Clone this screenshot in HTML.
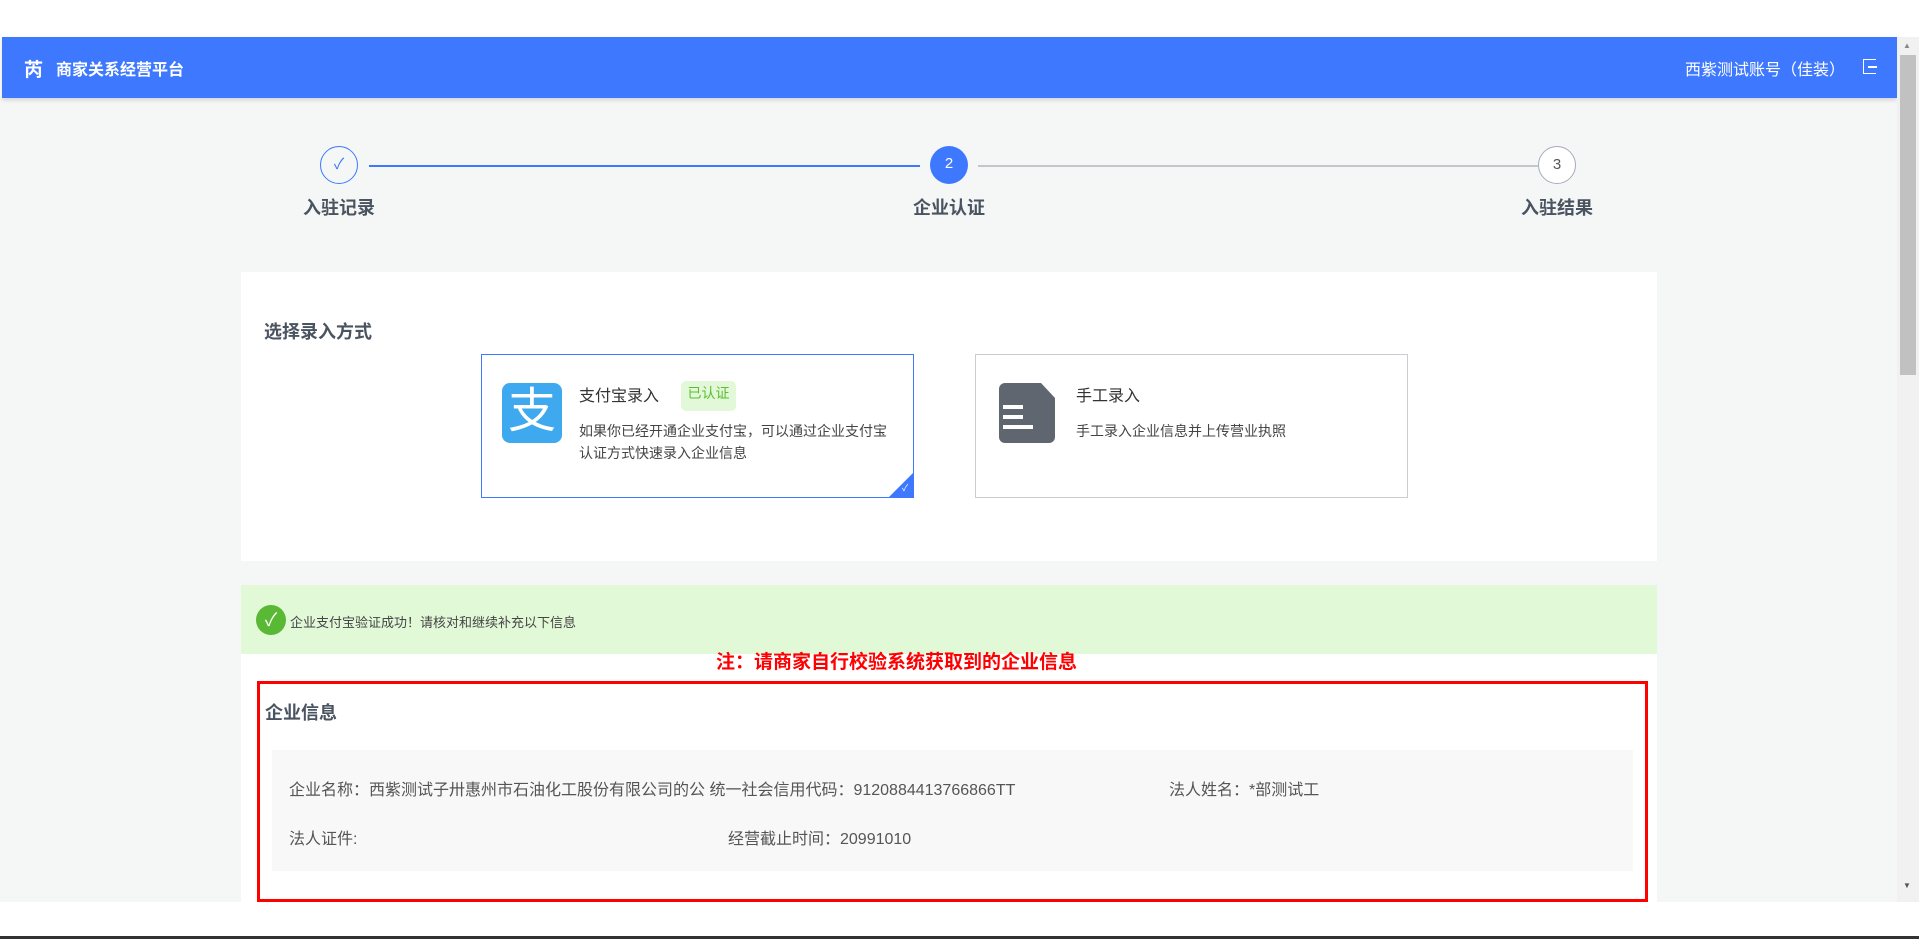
<!DOCTYPE html>
<html><head><meta charset="utf-8"><style>
*{margin:0;padding:0;box-sizing:border-box}
body{width:1919px;height:939px;position:relative;overflow:hidden;background:#fff;font-family:"Liberation Sans","Noto Sans CJK SC",sans-serif;color:#333}
.abs{position:absolute}
.bg{left:0;top:98px;width:1897px;height:804px;background:#f5f7f7}
.hdr{left:2px;top:37px;width:1895px;height:61px;background:#3e78ff;color:#fff;box-shadow:0 2px 4px rgba(0,0,0,.15)}
.sb{left:1897px;top:37px;width:22px;height:865px;background:#f1f1f1}
.circ{width:38px;height:38px;border-radius:50%;text-align:center;line-height:36px;font-size:15px}
.lbl{font-size:18px;font-weight:bold;color:#4a5360;width:200px;text-align:center;top:194px}
.card{background:#fff}
.opt{width:433px;height:144px;background:#fff;border:1px solid #c8cdd2}
.row{font-size:16px;color:#555}
</style></head><body>
<div class="abs bg"></div>
<div class="abs hdr">
  <div class="abs" style="left:22px;top:18px;font-size:19px;font-weight:bold">芮</div>
  <div class="abs" style="left:54px;top:19px;font-size:16px;font-weight:bold">商家关系经营平台</div>
  <div class="abs" style="left:1683px;top:19px;font-size:16px">西紫测试账号（佳装）</div>
  <div class="abs" style="left:1861px;top:22px;width:13px;height:15px;border:1.5px solid #fff;border-right:none"></div>
  <div class="abs" style="left:1866px;top:29px;width:9px;height:1.5px;background:#fff"></div>
</div>
<div class="abs sb"><div class="abs" style="left:3px;top:18px;width:16px;height:320px;background:#c1c1c1"></div><div class="abs" style="left:6px;top:4px;font-size:8px;color:#888">▲</div><div class="abs" style="left:6px;top:844px;font-size:8px;color:#555">▼</div></div>
<div class="abs" style="left:0;top:902px;width:1919px;height:37px;background:#fff"></div>
<div class="abs" style="left:0;top:936px;width:1919px;height:3px;background:#333"></div>

<div class="abs" style="left:369px;top:165px;width:551px;height:1.5px;background:#3e78ff"></div>
<div class="abs" style="left:978px;top:165px;width:560px;height:1.5px;background:#c0c8cc"></div>
<div class="abs circ" style="left:320px;top:146px;border:1px solid #3e78ff;color:#3e78ff">✓</div>
<div class="abs circ" style="left:930px;top:146px;background:#3e78ff;color:#fff">2</div>
<div class="abs circ" style="left:1538px;top:146px;border:1px solid #aab;color:#555;background:#fff">3</div>
<div class="abs lbl" style="left:239px">入驻记录</div>
<div class="abs lbl" style="left:849px">企业认证</div>
<div class="abs lbl" style="left:1457px">入驻结果</div>

<div class="abs card" style="left:241px;top:272px;width:1416px;height:289px"></div>
<div class="abs" style="left:264px;top:318px;font-size:18px;font-weight:bold;color:#4a5360">选择录入方式</div>
<div class="abs opt" style="left:481px;top:354px;border-color:#3e78ff;overflow:hidden">
  <div class="abs" style="left:20px;top:28px;width:60px;height:60px;border-radius:8px;background:#3fa9f0;color:#fff;font-size:48px;line-height:58px;text-align:center">支</div>
  <div class="abs" style="left:97px;top:27px;font-size:16px;color:#333">支付宝录入</div>
  <div class="abs" style="left:199px;top:26px;width:55px;height:30px;border-radius:5px;background:#e2f8d8;color:#5bbf30;font-size:14px;text-align:center;line-height:24px">已认证</div>
  <div class="abs" style="left:97px;top:65px;font-size:14px;line-height:22px;color:#444;width:318px">如果你已经开通企业支付宝，可以通过企业支付宝认证方式快速录入企业信息</div>
  <div class="abs" style="left:405px;top:116px;width:0;height:0;border-left:28px solid transparent;border-bottom:28px solid #3e78ff"></div>
  <div class="abs" style="left:420px;top:126px;font-size:9px;color:#fff">✓</div>
</div>
<div class="abs opt" style="left:975px;top:354px">
  <div class="abs" style="left:23px;top:28px;width:56px;height:60px;background:#5f6670;border-radius:6px;clip-path:polygon(0 0,75% 0,100% 25%,100% 100%,0 100%)"></div>
  <div class="abs" style="left:27px;top:50px;width:20px;height:4px;background:#fff"></div>
  <div class="abs" style="left:27px;top:60px;width:20px;height:4px;background:#fff"></div>
  <div class="abs" style="left:27px;top:70px;width:30px;height:4px;background:#fff"></div>
  <div class="abs" style="left:100px;top:27px;font-size:16px">手工录入</div>
  <div class="abs" style="left:100px;top:66px;font-size:14px;color:#444">手工录入企业信息并上传营业执照</div>
</div>

<div class="abs" style="left:241px;top:585px;width:1416px;height:69px;background:#e2f9d8"></div>
<div class="abs" style="left:256px;top:605px;width:30px;height:30px;border-radius:50%;background:#59b935;color:#fff;text-align:center;line-height:30px;font-size:18px">✓</div>
<div class="abs" style="left:290px;top:612px;font-size:13px;color:#444">企业支付宝验证成功！请核对和继续补充以下信息</div>
<div class="abs card" style="left:241px;top:654px;width:1416px;height:248px"></div>
<div class="abs" style="left:716px;top:647px;font-size:19px;font-weight:bold;color:#f00">注：请商家自行校验系统获取到的企业信息</div>
<div class="abs" style="left:257px;top:681px;width:1391px;height:221px;border:3px solid #f00"></div>
<div class="abs" style="left:265px;top:699px;font-size:18px;font-weight:bold;color:#4a5360">企业信息</div>
<div class="abs" style="left:272px;top:750px;width:1361px;height:121px;background:#f8f8f8"></div>
<div class="abs row" style="left:289px;top:776px">企业名称：西紫测试子卅惠州市石油化工股份有限公司的公 统一社会信用代码：9120884413766866TT</div>
<div class="abs row" style="left:1169px;top:776px">法人姓名：*部测试工</div>
<div class="abs row" style="left:289px;top:825px">法人证件:</div>
<div class="abs row" style="left:728px;top:825px">经营截止时间：20991010</div>
</body></html>
